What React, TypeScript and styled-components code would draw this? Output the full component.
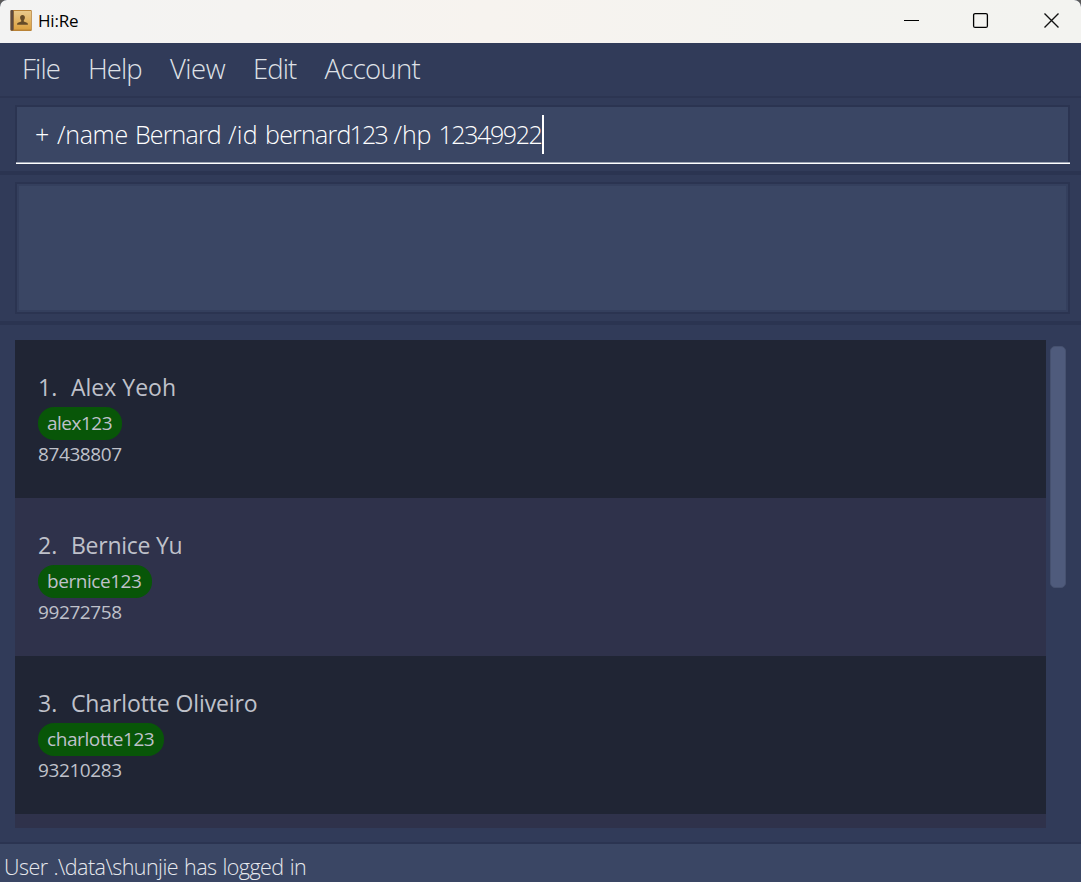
import React from "react";
import styled, { createGlobalStyle } from "styled-components";

const Global = createGlobalStyle`
  * { box-sizing: border-box; }
  html, body { margin: 0; padding: 0; background: #5a5a5a; }
  body { font-family: "Open Sans", "Noto Sans", sans-serif; overflow: hidden; }
`;

const Window = styled.div`
  width: 1081px;
  height: 882px;
  display: flex;
  flex-direction: column;
  background: #313b59;
  border-radius: 7px 7px 0 0;
  overflow: hidden;
  white-space: pre;
`;

const TitleBar = styled.header`
  height: 43px;
  flex: none;
  display: flex;
  align-items: center;
  background: linear-gradient(90deg, #f3f3f3, #f7f3ef 45%, #f4f3f0 75%, #f3f3f0);
  padding: 0 19px 3px 10px;
`;

const Title = styled.h1`
  margin: 0 auto 0 6px;
  padding-top: 1px;
  font-size: 17px;
  line-height: 22px;
  font-weight: 400;
  letter-spacing: -0.2px;
  color: #000;
`;

const Controls = styled.div`
  display: flex;
  align-items: center;
  gap: 50px;
`;

const MenuBar = styled.nav`
  height: 55px;
  flex: none;
  display: flex;
  padding: 0 22px;
  border-bottom: 2px solid #2c3552;
`;

const MenuItem = styled.span<{ $width: number; $spacing: number }>`
  width: ${(p) => p.$width}px;
  font-size: 27.5px;
  font-weight: 300;
  line-height: 52px;
  letter-spacing: ${(p) => p.$spacing}px;
  color: #dfe1e7;
`;

const CommandPane = styled.section`
  height: 77px;
  flex: none;
  padding: 7px 11px 0 15px;
  border-bottom: 4px solid #2b3451;
`;

const CommandField = styled.div`
  height: 57px;
  display: flex;
  align-items: center;
  padding: 0 0 0 18px;
  background: #3a4664;
  border: 2px solid #2b3451;
  border-bottom: 0;
`;

const Underline = styled.div`
  height: 2px;
  margin-left: 1px;
  background: linear-gradient(#9da4b3 50%, #fff 50%);
`;

const Word = styled.span<{ $width: number; $spacing: number }>`
  width: ${(p) => p.$width}px;
  flex: none;
  font-size: 25px;
  font-weight: 300;
  line-height: 36px;
  padding-bottom: 2px;
  letter-spacing: ${(p) => p.$spacing}px;
  color: #fff;
`;

const Caret = styled.i`
  width: 2px;
  height: 39px;
  background: #fff;
`;

const ResultPane = styled.section`
  height: 150px;
  flex: none;
  padding: 7px 11px 0 15px;
  border-bottom: 4px solid #2b3451;
`;

const ResultBox = styled.div`
  height: 132px;
  background: #3a4664;
  border: 2px solid #2b3451;
  box-shadow: inset 0 0 0 2px #343f5d;
`;

const ListPane = styled.main`
  height: 517px;
  flex: none;
  display: flex;
  align-items: flex-start;
  padding: 15px 15px 0;
`;

const PersonList = styled.div`
  width: 1031px;
  height: 488px;
  overflow: hidden;
`;

const Card = styled.article`
  height: 158px;
  padding: 31px 23px 0;
  color: #bfc1ca;
  background: #202534;
  &:nth-child(even) { background: #2f324b; }
`;

const NameLine = styled.div`
  display: flex;
  font-size: 23px;
  line-height: 32px;
  margin-bottom: 4px;
`;

const Index = styled.span`
  width: 33px;
`;

const Name = styled.span<{ $spacing: number }>`
  letter-spacing: ${(p) => p.$spacing}px;
`;

const Tag = styled.div<{ $width: number; $spacing: number }>`
  width: ${(p) => p.$width}px;
  height: 33px;
  padding-left: 9px;
  border-radius: 16px;
  background: #085608;
  font-size: 19px;
  line-height: 32px;
  letter-spacing: ${(p) => p.$spacing}px;
`;

const Phone = styled.div`
  font-size: 19px;
  line-height: 28px;
  letter-spacing: -0.4px;
`;

const Thumb = styled.div`
  width: 16px;
  height: 242px;
  margin: 6px 0 0 4px;
  border-radius: 5px;
  background: #4f5b7c;
  border: 1px solid #46516f;
`;

const StatusBar = styled.footer`
  flex: 1;
  padding-left: 4px;
  border-top: 2px solid #2b3451;
  background: #3a4664;
  font-size: 21.5px;
  font-weight: 300;
  line-height: 46px;
  letter-spacing: -0.55px;
  word-spacing: 1px;
  color: #e6e8ed;
`;

const menus = [
  { label: "File", width: 66, spacing: -0.8 },
  { label: "Help", width: 82, spacing: -0.95 },
  { label: "View", width: 83, spacing: -0.5 },
  { label: "Edit", width: 71.5, spacing: -0.95 },
  { label: "Account", width: 110, spacing: -0.7 },
];

const command = [
  { text: "+", width: 22, spacing: 0 },
  { text: "/name", width: 78, spacing: -0.3 },
  { text: "Bernard", width: 93, spacing: -0.85 },
  { text: "/id", width: 37, spacing: 0.3 },
  { text: "bernard", width: 84.5, spacing: -0.75 },
  { text: "123", width: 44, spacing: -1.8 },
  { text: "/hp", width: 45, spacing: -0.1 },
  { text: "12349922", width: 103, spacing: -1.4 },
];

const people = [
  { name: "Alex Yeoh", ns: 0, id: "alex123", width: 84, ts: -0.5, phone: "87438807" },
  { name: "Bernice Yu", ns: -0.25, id: "bernice123", width: 113.5, ts: -0.45, phone: "99272758" },
  { name: "Charlotte Oliveiro", ns: -0.12, id: "charlotte123", width: 126, ts: -0.4, phone: "93210283" },
];

const BookIcon = () => (
  <svg width="22" height="21" viewBox="0 0 22 21">
    <defs>
      <linearGradient id="cover" x1="0" y1="0" x2="0" y2="1">
        <stop offset="0" stopColor="#e9c98c" />
        <stop offset="1" stopColor="#dda13f" />
      </linearGradient>
    </defs>
    <rect x="0.5" y="0" width="21.3" height="21" rx="1" fill="#b98236" />
    <rect x="4" y="1" width="17" height="18.5" fill="url(#cover)" />
    <rect x="0.5" y="0" width="3" height="20.5" rx="1" fill="#5d4a40" />
    <path d="M12.5 5c1.500 0 2.400 1 2.400 2.500 0 1.200-.5 2-1.100 2.700v1.300l3.200 1.200c.7.3.9.9.9 2.100H7.100c0-1.200.2-1.800.9-2.100l3.200-1.200v-1.300c-.6-.7-1.100-1.500-1.100-2.700 0-1.500.9-2.500 2.400-2.500z" fill="#654a27" />
  </svg>
);

export default function App() {
  return (
    <>
      <Global />
      <Window>
        <TitleBar>
          <BookIcon />
          <Title>Hi:Re</Title>
          <Controls>
            <svg width="20" height="20" viewBox="0 0 20 20">
              <path d="M2 10.500H17" stroke="#000" />
            </svg>
            <svg width="20" height="20" viewBox="0 0 20 20">
              <rect x="1.600" y="3.600" width="13.800" height="13.800" rx="1.500" fill="none" stroke="#000" strokeWidth="1.300" />
            </svg>
            <svg width="20" height="20" viewBox="0 0 20 20">
              <path d="M2.500 3.500L16.500 17.500M16.500 3.500L2.500 17.500" stroke="#111" strokeWidth="1.400" />
            </svg>
          </Controls>
        </TitleBar>
        <MenuBar>
          {menus.map((m) => (
            <MenuItem key={m.label} $width={m.width} $spacing={m.spacing}>{m.label}</MenuItem>
          ))}
        </MenuBar>
        <CommandPane>
          <CommandField>
            {command.map((w) => (
              <Word key={w.text} $width={w.width} $spacing={w.spacing}>{w.text}</Word>
            ))}
            <Caret />
          </CommandField>
          <Underline />
        </CommandPane>
        <ResultPane>
          <ResultBox />
        </ResultPane>
        <ListPane>
          <PersonList>
            {people.map((p, i) => (
              <Card key={p.id}>
                <NameLine>
                  <Index>{i + 1}.</Index>
                  <Name $spacing={p.ns}>{p.name}</Name>
                </NameLine>
                <Tag $width={p.width} $spacing={p.ts}>{p.id}</Tag>
                <Phone>{p.phone}</Phone>
              </Card>
            ))}
            <Card />
          </PersonList>
          <Thumb />
        </ListPane>
        <StatusBar>User .\data\shunjie has logged in</StatusBar>
      </Window>
    </>
  );
}
